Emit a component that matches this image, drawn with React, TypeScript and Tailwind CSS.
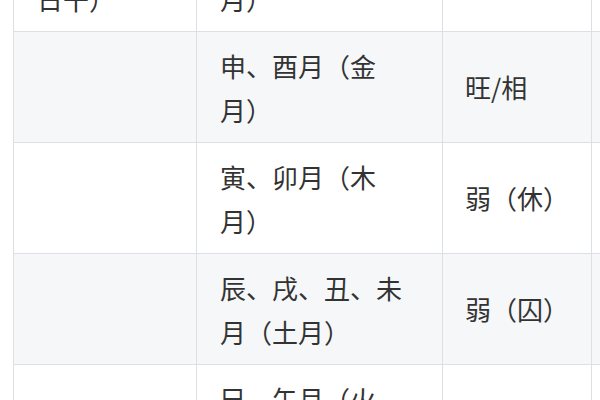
import React from "react";

type Row = { a: React.ReactNode; b: React.ReactNode; c: React.ReactNode; gray: boolean };

const rows: Row[] = [
  { a: <>金（庚辛<br />日干）</>, b: <>亥、子月（水<br />月）</>, c: "", gray: false },
  { a: "", b: <>申、酉月（金<br />月）</>, c: "旺/相", gray: true },
  { a: "", b: <>寅、卯月（木<br />月）</>, c: "弱（休）", gray: false },
  { a: "", b: <>辰、戌、丑、未<br />月（土月）</>, c: "弱（囚）", gray: true },
  { a: "", b: <>巳、午月（火<br />月）</>, c: "弱（死）", gray: false },
];

export default function App() {
  return (
    <div
      className="w-[600px] h-[400px] overflow-hidden bg-white text-[#333333] text-[26px] leading-[44px] [text-spacing-trim:space-all]"
      style={{ fontFamily: '"Noto Sans CJK SC", "Noto Sans", sans-serif' }}
    >
      <div className="ml-[13px] mt-[-79px] w-[700px]">
        {rows.map((r, i) => (
          <div
            key={i}
            className={`grid grid-cols-[183px_246px_149px_122px] h-[111px] border-b border-[#dcdfe3] ${
              r.gray ? "bg-[#f6f7f9]" : "bg-white"
            }`}
          >
            <div className="border-l border-[#dcdfe3] pl-[23px] pr-[23px] pt-[12px] pb-[10px] whitespace-nowrap">{r.a}</div>
            <div className="border-l border-[#dcdfe3] pl-[23px] pr-[23px] pt-[12px] pb-[10px] whitespace-nowrap">{r.b}</div>
            <div className="border-l border-[#dcdfe3] pl-[22px] pr-[22px] flex items-center whitespace-nowrap">{r.c}</div>
            <div className="border-l border-[#dcdfe3]"></div>
          </div>
        ))}
      </div>
    </div>
  );
}
